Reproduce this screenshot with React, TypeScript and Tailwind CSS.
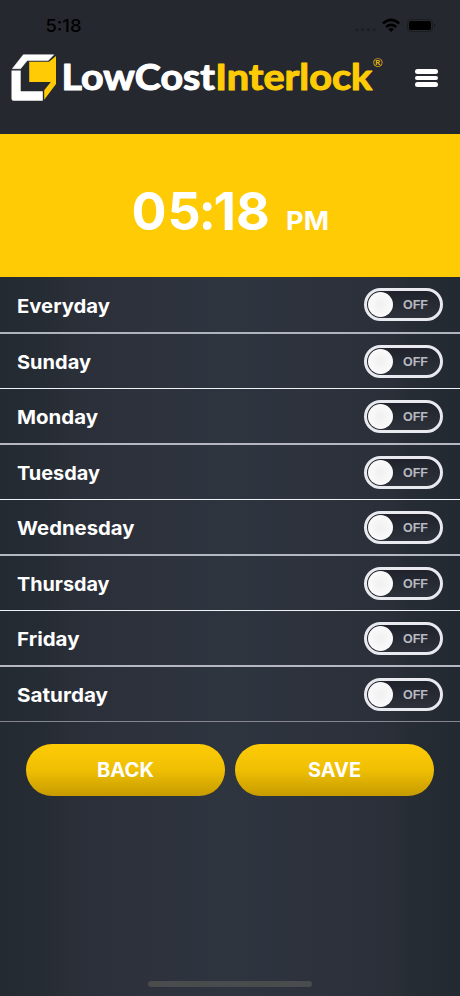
import React from "react";

const days = [
  { name: "Everyday", width: 93, height: "h-[57px]", line: "border-b-2 border-[#b0b3be]" },
  { name: "Sunday", width: 74, height: "h-[55px]", line: "border-b border-[#f0f1f5]" },
  { name: "Monday", width: 81, height: "h-[56px]", line: "border-b-2 border-[#b5b8c2]" },
  { name: "Tuesday", width: 83, height: "h-[55px]", line: "border-b border-[#f0f1f5]" },
  { name: "Wednesday", width: 117.5, height: "h-[56px]", line: "border-b-2 border-[#b5b8c2]" },
  { name: "Thursday", width: 92.5, height: "h-[55px]", line: "border-b border-[#f0f1f5]" },
  { name: "Friday", width: 62.5, height: "h-[56px]", line: "border-b-2 border-[#b5b8c2]" },
  { name: "Saturday", width: 91, height: "h-[55px]", line: "border-b border-[#85868f]" },
];

function StatusBar() {
  return (
    <div className="flex h-[50px] items-start justify-between pl-[45px] pr-[24px] pt-[16px] text-black">
      <svg width="38" height="20" className="overflow-visible">
        <text x="0.5" y="16" textLength="36" lengthAdjust="spacingAndGlyphs" className="fill-black font-['Inter',sans-serif] text-[17.5px] font-medium">5:18</text>
      </svg>
      <svg width="82" height="20" viewBox="354 16 82 20">
        <g fill="#1c1e23">
          <circle cx="357" cy="29.7" r="1.5" /><circle cx="362.7" cy="29.7" r="1.5" /><circle cx="368.4" cy="29.7" r="1.5" /><circle cx="374" cy="29.7" r="1.5" />
        </g>
        <g fill="none" stroke="#000" strokeWidth="2.600">
          <path d="M383 23.400q8.100-7 16.200 0M386 27q5.100-4.200 10.200 0" />
        </g>
        <path d="M388.200 29q2.900-2.100 5.800 0l-2.900 2.900z" fill="#000" />
        <rect x="407.500" y="19.500" width="25" height="12" rx="3.500" fill="none" stroke="#1b1d21" />
        <rect x="409" y="21" width="22" height="9" rx="2" fill="#000" />
        <path d="M434 23.500q2 2 0 4z" fill="#14161a" />
      </svg>
    </div>
  );
}

function Logo() {
  return (
    <svg width="378" height="52" viewBox="8 52 378 52" role="img" aria-label="LowCostInterlock" className="shrink-0">
      <path d="M23.300 54.700H53.800L48.200 60.600H27.200L20.600 68.700H12.300z" fill="#fff" stroke="#fff" strokeWidth=".5" />
      <path d="M12 70.500H20.700V91.200H42.800V100.700H13.500Q11.500 100.700 11.500 98.500V70.500z" fill="#fff" />
      <path d="M29.200 61.800H49L56 56V84L44.200 99.700V90.300L50.800 82H29.200z" fill="#fecb05" />
      <text x="61.500" y="89.800" textLength="153.500" lengthAdjust="spacingAndGlyphs" fill="#fff" stroke="#fff" strokeWidth="1.100" strokeLinejoin="round" className="font-['Lato',sans-serif] text-[36.500px] font-bold">LowCost</text>
      <text x="215.300" y="89.800" textLength="157" lengthAdjust="spacingAndGlyphs" fill="#fecb05" stroke="#fecb05" strokeWidth="1.100" strokeLinejoin="round" className="font-['Lato',sans-serif] text-[36.500px] font-bold">Interlock</text>
      <text x="373" y="67.300" textLength="9.500" lengthAdjust="spacingAndGlyphs" fill="#e0b614" className="font-['Liberation_Sans',sans-serif] text-[12.500px] font-bold">®</text>
    </svg>
  );
}

function Toggle() {
  return (
    <button role="switch" aria-checked="false" className="flex h-[33px] w-[79px] items-center rounded-full border-[3px] border-[#e9eaf0] bg-linear-to-b from-[#20232b] to-[#2d313a] pl-px pr-[12px]">
      <span className="size-[25px] rounded-full bg-radial from-[#f0f0f0] to-white" />
      <span className="ml-auto pt-[2px] font-['Liberation_Sans',sans-serif] text-[12.500px] font-bold leading-none text-[#b7bac3]">OFF</span>
    </button>
  );
}

function PillButton({ label, width }: { label: string; width: number }) {
  return (
    <button className="flex h-[52px] w-[199px] items-center justify-center rounded-full bg-linear-to-b from-[#fecb05] via-[#efbf04] to-[#c79b00]">
      <svg width={width} height="24" className="overflow-visible">
        <text x="0" y="19" textLength={width} lengthAdjust="spacingAndGlyphs" className="fill-white font-['Inter',sans-serif] text-[19.500px] font-bold">{label}</text>
      </svg>
    </button>
  );
}

export default function App() {
  return (
    <main className="flex h-[996px] w-[460px] flex-col overflow-hidden bg-[linear-gradient(to_right,#232a31_0%,#262c33_9%,#2b2f39_17%,#2d323d_35%,#2e353f_50%,#2d323d_66%,#2b2f39_84%,#262c33_91%,#232931_100%)]">
      <header className="h-[134px] shrink-0 bg-[#25282f]">
        <StatusBar />
        <div className="flex items-center pl-[8px] pt-[2px]">
          <Logo />
          <button aria-label="Menu" className="ml-[29px] flex w-[23px] flex-col gap-[2px]">
            <span className="h-[4.500px] rounded-full bg-white" />
            <span className="h-[4.500px] rounded-full bg-white" />
            <span className="h-[4.500px] rounded-full bg-white" />
          </button>
        </div>
      </header>
      <section className="flex h-[143px] shrink-0 justify-center bg-[#fecb05] pt-[48px]">
        <svg width="198" height="60" className="overflow-visible fill-white font-['Inter',sans-serif] font-bold">
          <text x="0.500 36.500 67.500 82.500 105" y="48" className="text-[52px]">05:18</text>
          <text x="155" y="47.500" textLength="43" lengthAdjust="spacingAndGlyphs" className="text-[26px]">PM</text>
        </svg>
      </section>
      <ul className="shrink-0">
        {days.map((day) => (
          <li key={day.name} className={`flex items-center justify-between pl-[17px] pr-[17px] ${day.height} ${day.line}`}>
            <svg width={day.width} height="28" className="overflow-visible">
              <text x="0" y="22.300" textLength={day.width} lengthAdjust="spacingAndGlyphs" className="fill-white font-['Inter',sans-serif] text-[19px] font-bold">{day.name}</text>
            </svg>
            <Toggle />
          </li>
        ))}
      </ul>
      <div className="flex justify-center gap-[10px] pr-px pt-[22px]">
        <PillButton label="BACK" width={57} />
        <PillButton label="SAVE" width={53} />
      </div>
      <div className="mb-[9px] mt-auto h-[6px] w-[164px] self-center rounded-full bg-[#4a4b4c]" />
    </main>
  );
}
